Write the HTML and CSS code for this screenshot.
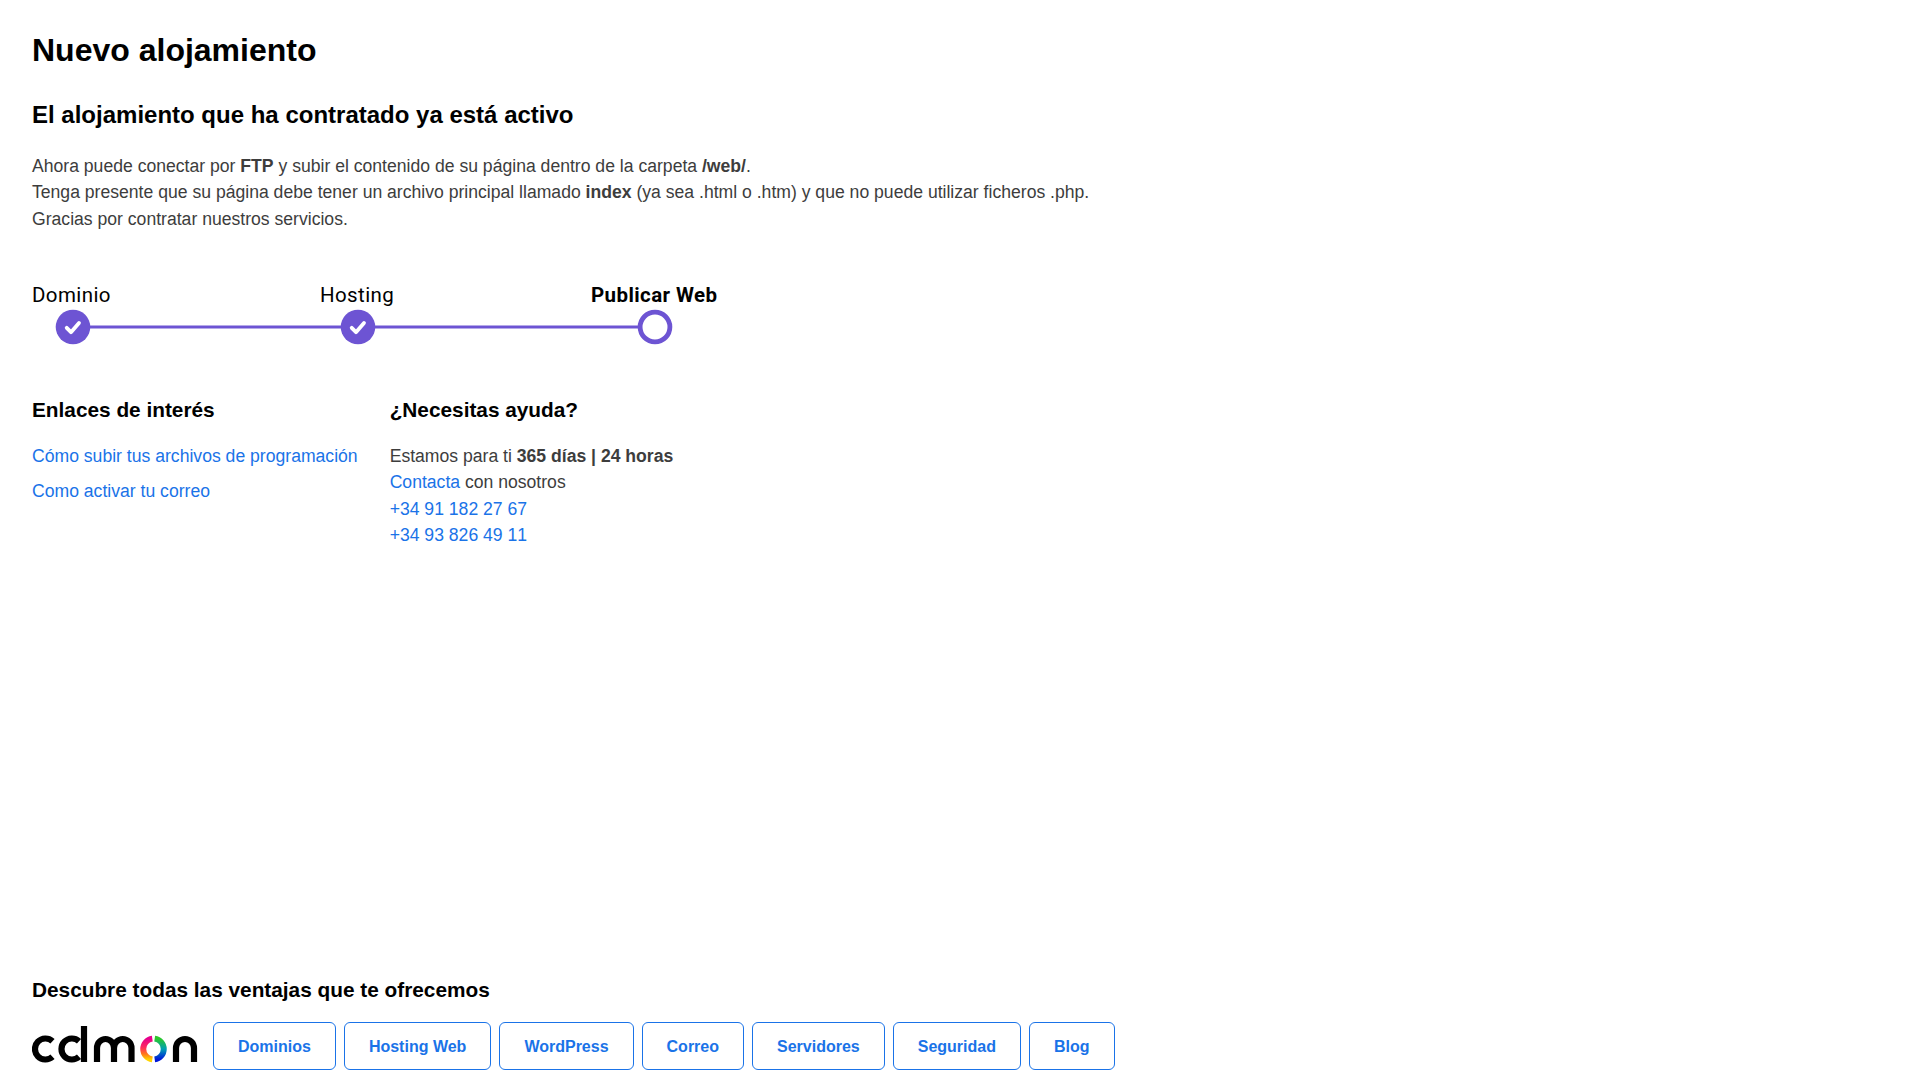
FILE: index.html
```html
<!DOCTYPE html>
<html lang="es">
<head>
<meta charset="utf-8">
<title>Nuevo alojamiento</title>
<link rel="stylesheet" href="styles.css">
</head>
<body>
<main class="page">
  <div class="top">
    <h1>Nuevo alojamiento</h1>
    <h2>El alojamiento que ha contratado ya está activo</h2>
    <p class="intro">Ahora puede conectar por <b>FTP</b> y subir el contenido de su página dentro de la carpeta <b>/web/</b>.<br>Tenga presente que su página debe tener un archivo principal llamado <b>index</b> (ya sea .html o .htm) y que no puede utilizar ficheros .php.<br>Gracias por contratar nuestros servicios.</p>
    <div class="stepper">
      <span class="step-label l1">Dominio</span>
      <span class="step-label l2">Hosting</span>
      <span class="step-label l3">Publicar Web</span>
      <svg class="step-track" width="700" height="36" viewBox="0 0 700 36">
        <line x1="41" y1="18" x2="625" y2="18" stroke="#6d54d3" stroke-width="3"/>
        <circle cx="41" cy="18" r="17.3" fill="#6d54d3"/>
        <path d="M34.700 18.800l4.300 4.400 8-9.200" fill="none" stroke="#fff" stroke-width="3.800" stroke-linecap="round" stroke-linejoin="round"/>
        <circle cx="326" cy="18" r="17.3" fill="#6d54d3"/>
        <path d="M319.700 18.800l4.300 4.400 8-9.200" fill="none" stroke="#fff" stroke-width="3.800" stroke-linecap="round" stroke-linejoin="round"/>
        <circle cx="623" cy="18" r="14.900" fill="#fff" stroke="#6d54d3" stroke-width="4.800"/>
      </svg>
    </div>
    <div class="columns">
      <section class="links">
        <h3>Enlaces de interés</h3>
        <a href="#">Cómo subir tus archivos de programación</a>
        <a href="#">Como activar tu correo</a>
      </section>
      <section class="help">
        <h3>¿Necesitas ayuda?</h3>
        <p>Estamos para ti <b>365 días | 24 horas</b><br><a href="#">Contacta</a> con nosotros<br><a class="tel" href="#">+34 91 182 27 67</a><br><a class="tel" href="#">+34 93 826 49 11</a></p>
      </section>
    </div>
  </div>
  <footer class="foot">
    <h3>Descubre todas las ventajas que te ofrecemos</h3>
    <nav class="nav">
      <svg class="logo" width="166" height="38" viewBox="0 0 166 38" aria-label="cdmon">
        <defs>
          <linearGradient id="warm" x1="0" y1="0" x2="0" y2="1"><stop offset="0" stop-color="#e6008c"/><stop offset=".45" stop-color="#ff2f5a"/><stop offset=".75" stop-color="#ff7a1a"/><stop offset="1" stop-color="#ffd400"/></linearGradient>
          <linearGradient id="cool" x1="0" y1="0" x2="0" y2="1"><stop offset="0" stop-color="#2cc82c"/><stop offset=".5" stop-color="#00a0b4"/><stop offset="1" stop-color="#0018d8"/></linearGradient>
        </defs>
        <g fill="none" stroke="#000" stroke-width="6.200">
          <path d="M20.500 16.200A10.500 10.500 0 1 0 20.500 31.800"/>
          <path d="M47 16.200A10.500 10.500 0 1 0 47 31.800"/>
          <path d="M52 1V37"/>
          <path d="M65 37V23a8.500 9 0 0 1 17 0V37M82 23a8.750 9 0 0 1 17.500 0V37"/>
          <path d="M144 37V23a9 9 0 0 1 18 0V37"/>
        </g>
        <path d="M120.300 13.600A10.500 10.500 0 0 0 120.300 34.400" fill="none" stroke="url(#warm)" stroke-width="6"/>
        <path d="M122.700 13.600A10.500 10.500 0 0 1 122.700 34.400" fill="none" stroke="url(#cool)" stroke-width="6"/>
      </svg>
      <a class="btn" href="#">Dominios</a>
      <a class="btn" href="#">Hosting Web</a>
      <a class="btn" href="#">WordPress</a>
      <a class="btn" href="#">Correo</a>
      <a class="btn" href="#">Servidores</a>
      <a class="btn" href="#">Seguridad</a>
      <a class="btn" href="#">Blog</a>
    </nav>
  </footer>
</main>
</body>
</html>
```
FILE: styles.css
```css
* { box-sizing: border-box; }
html, body { margin: 0; height: 100%; }
body { font-family: "Liberation Sans", Arial, sans-serif; color: #3d3d3d; background: #fff; }
.page { height: 1080px; padding: 32px 32px 10px; display: flex; flex-direction: column; justify-content: space-between; }
h1 { margin: 0 0 32px; font-size: 32px; line-height: 36px; color: #000; font-weight: 700; }
h2 { margin: 0 0 23px; font-size: 24px; line-height: 30px; color: #000; font-weight: 700; }
h3 { margin: 0; font-size: 20.8px; line-height: 26px; color: #000; font-weight: 700; }
.intro { margin: 0; font-size: 17.6px; line-height: 26.4px; }
a { color: #1a73e8; text-decoration: none; }
.tel { font-kerning: none; }
.stepper { position: relative; height: 62px; margin-top: 51px; }
.step-label { position: absolute; top: 0; font-family: Roboto, sans-serif; font-size: 20.5px; letter-spacing: .4px; line-height: 24px; color: #000; }
.l1 { left: 0; }
.l2 { left: 288px; }
.l3 { left: 559px; font-weight: 700; }
.step-track { position: absolute; left: 0; top: 25.3px; }
.columns { display: flex; gap: 32px; margin-top: 52px; font-size: 17.6px; line-height: 26.4px; }
.links h3 { margin-bottom: 20px; }
.help h3 { margin-bottom: 19.7px; }
.links a { display: block; margin-bottom: 8.6px; }
.help p { margin: 0; }
.foot h3 { margin-bottom: 19px; }
.nav { display: flex; align-items: center; gap: 8px; }
.logo { margin: 0 7px 4px 0; flex: none; }
.btn { display: block; height: 48px; line-height: 47px; padding: 0 24px; border: 1px solid #1a73e8; border-radius: 6px; font-size: 16px; font-weight: 700; }
```
